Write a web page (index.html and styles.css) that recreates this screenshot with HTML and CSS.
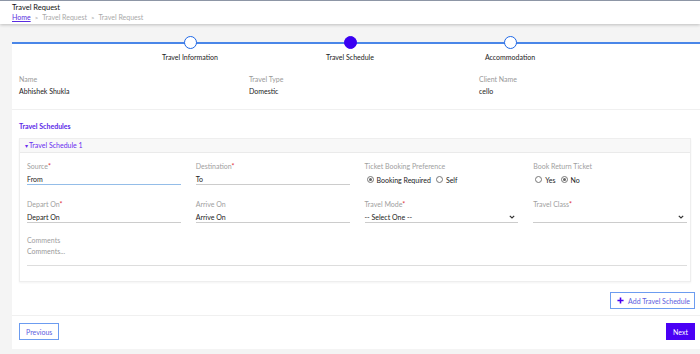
FILE: index.html
```html
<!DOCTYPE html>
<html>
<head>
<meta charset="utf-8">
<link rel="stylesheet" href="styles.css">
</head>
<body>
<header class="topbar">
  <div class="title">Travel Request</div>
  <nav class="crumbs"><a class="crumb-home">Home</a><span class="sep">&gt;</span><span>Travel Request</span><span class="sep">&gt;</span><span>Travel Request</span></nav>
</header>
<main class="page">
  <div class="card">
    <div class="stepper">
      <div class="step"><span class="dot"></span><span class="step-label">Travel Information</span></div>
      <div class="step"><span class="dot dot-active"></span><span class="step-label">Travel Schedule</span></div>
      <div class="step"><span class="dot"></span><span class="step-label">Accommodation</span></div>
    </div>
    <section class="info">
      <div><div class="info-label">Name</div><div class="info-value">Abhishek Shukla</div></div>
      <div><div class="info-label">Travel Type</div><div class="info-value">Domestic</div></div>
      <div><div class="info-label">Client Name</div><div class="info-value">cello</div></div>
    </section>
    <section class="schedules">
      <h2 class="sched-title">Travel Schedules</h2>
      <div class="panel">
        <div class="panel-head"><span class="caret">&#9662;</span>Travel Schedule 1</div>
        <div class="panel-body">
          <div class="grid">
            <div class="field"><div class="flabel">Source<span class="req">*</span></div><div class="finput finput-focus">From</div></div>
            <div class="field"><div class="flabel">Destination<span class="req">*</span></div><div class="finput">To</div></div>
            <div class="field"><div class="flabel">Ticket Booking Preference</div><div class="radios"><span class="radio checked"></span><span class="rtext">Booking Required</span><span class="radio"></span><span class="rtext">Self</span></div></div>
            <div class="field"><div class="flabel">Book Return Ticket</div><div class="radios"><span class="radio"></span><span class="rtext">Yes</span><span class="radio checked"></span><span class="rtext">No</span></div></div>
            <div class="field"><div class="flabel">Depart On<span class="req">*</span></div><div class="finput">Depart On</div></div>
            <div class="field"><div class="flabel">Arrive On</div><div class="finput">Arrive On</div></div>
            <div class="field"><div class="flabel">Travel Mode<span class="req">*</span></div><div class="finput fselect"><span>-- Select One --</span><svg class="chev" viewBox="0 0 6 4" width="6" height="4"><path d="M0.8 0.8 L3 3 L5.2 0.8" fill="none" stroke="#333" stroke-width="1.2"/></svg></div></div>
            <div class="field"><div class="flabel">Travel Class<span class="req">*</span></div><div class="finput fselect"><span></span><svg class="chev" viewBox="0 0 6 4" width="6" height="4"><path d="M0.8 0.8 L3 3 L5.2 0.8" fill="none" stroke="#333" stroke-width="1.2"/></svg></div></div>
          </div>
          <div class="comments">
            <div class="flabel">Comments</div>
            <div class="ctext">Comments...</div>
          </div>
        </div>
      </div>
      <div class="add-row">
        <button class="btn btn-outline btn-add"><svg viewBox="0 0 8 8" width="7" height="7"><path d="M4 0.5 V7.5 M0.5 4 H7.5" stroke="#4a00f0" stroke-width="1.8"/></svg>Add Travel Schedule</button>
      </div>
    </section>
    <footer class="actions">
      <button class="btn btn-outline">Previous</button>
      <button class="btn btn-primary">Next</button>
    </footer>
  </div>
</main>
</body>
</html>
```

FILE: styles.css
```css
html, body {
  margin: 0;
  padding: 0;
}
body {
  width: 700px;
  height: 354px;
  overflow: hidden;
  background: #f4f4f4;
  font-family: Lato, "Open Sans", sans-serif;
  font-size: 7px;
  color: #222;
}
.topbar {
  background: #fff;
  border-top: 1px solid #8d96a6;
  height: 24px;
  box-sizing: border-box;
  padding: 2px 0 0 12px;
  box-shadow: 0 1px 3px rgba(0, 0, 0, 0.22);
  position: relative;
  z-index: 1;
}
.title {
  font-size: 7.5px;
  line-height: 9px;
  color: #111;
}
.crumbs {
  display: flex;
  align-items: center;
  gap: 4px;
  line-height: 9px;
  margin-top: 1px;
  color: #aaa;
}
.crumb-home {
  color: #5a2de0;
  text-decoration: underline;
}
.sep {
  font-size: 6px;
  color: #999;
}
.page {
  padding: 18px 0 0 12px;
}
.card {
  background: #fff;
  border-top: 2px solid #4a86e8;
  margin-right: -1px;
  padding-bottom: 9px;
}
.stepper {
  display: flex;
  justify-content: center;
  padding-right: 13px;
  margin-top: -8px;
}
.step {
  width: 160px;
  display: flex;
  flex-direction: column;
  align-items: center;
}
.dot {
  width: 13px;
  height: 13px;
  box-sizing: border-box;
  border-radius: 50%;
  border: 1.5px solid #1f68e6;
  background: #fff;
}
.dot-active {
  background: #3a00f2;
  border-color: #3a00f2;
}
.step-label {
  margin-top: 4px;
  line-height: 9px;
  color: #222;
}
.info {
  display: grid;
  grid-template-columns: repeat(3, 230px);
  padding: 13px 6px 13px 7px;
  border-bottom: 1px solid #f0f0f0;
}
.info-label {
  line-height: 9px;
  color: #999;
}
.info-value {
  line-height: 9px;
  margin-top: 3px;
  color: #222;
}
.schedules {
  padding: 11px 6px 6px 7px;
  border-bottom: 1px solid #f0f0f0;
}
.sched-title {
  margin: 0;
  font-size: 7px;
  font-weight: 700;
  line-height: 10px;
  color: #5b28e8;
}
.panel {
  margin: 7px 4px 0 0;
  border: 1px solid #eee;
  box-shadow: 0 1px 2px rgba(0, 0, 0, 0.05);
}
.panel-head {
  background: #f8f8f8;
  border-bottom: 1px solid #eaeaea;
  line-height: 13px;
  padding-left: 5px;
  color: #6a2cf0;
}
.caret {
  font-size: 6px;
  margin-right: 1px;
}
.panel-body {
  padding: 9px 3px 15px 7px;
}
.grid {
  display: grid;
  grid-template-columns: repeat(4, 1fr);
  column-gap: 15px;
  row-gap: 15px;
}
.flabel {
  line-height: 9px;
  color: #a0a0a0;
}
.req {
  color: #e0303a;
}
.finput {
  margin-top: 3px;
  height: 10px;
  line-height: 10px;
  border-bottom: 1px solid #ccc;
  color: #222;
}
.finput-focus {
  border-bottom-color: #94bde8;
}
.fselect {
  display: flex;
  justify-content: space-between;
  align-items: center;
  padding-right: 3px;
}
.chev {
  display: block;
}
.radios {
  margin-top: 3px;
  height: 11px;
  display: flex;
  align-items: center;
  color: #222;
}
.radio {
  width: 7px;
  height: 7px;
  box-sizing: border-box;
  border: 1px solid #777;
  border-radius: 50%;
  margin-left: 2px;
  margin-right: 3px;
  position: relative;
}
.radio.checked::after {
  content: "";
  position: absolute;
  left: 1px;
  top: 1px;
  width: 3px;
  height: 3px;
  border-radius: 50%;
  background: #666;
}
.rtext {
  margin-right: 3px;
}
.comments {
  margin-top: 13px;
}
.ctext {
  margin-top: 2px;
  line-height: 9px;
  height: 18px;
  color: #999;
  border-bottom: 1px solid #ddd;
}
.add-row {
  display: flex;
  justify-content: flex-end;
  margin-top: 10px;
}
.btn {
  font-family: Lato, "Open Sans", sans-serif;
  font-size: 7px;
  height: 17px;
  box-sizing: border-box;
  padding: 0 6px;
  border-radius: 0;
  cursor: pointer;
  display: inline-flex;
  align-items: center;
}
.btn-outline {
  background: #fff;
  border: 1px solid #6c9cf0;
  color: #6060e0;
}
.btn-add {
  gap: 4px;
  padding: 0 4px 0 6px;
}
.btn-add svg {
  display: block;
}
.btn-primary {
  background: #4a00f5;
  border: 1px solid #4a00f5;
  color: #fff;
}
.actions {
  display: flex;
  justify-content: space-between;
  padding: 7px 6px 0 7px;
}
```
